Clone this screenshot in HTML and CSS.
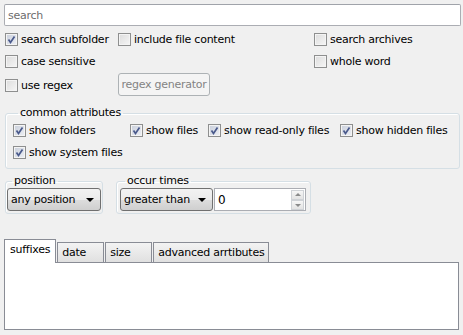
FILE: index.html
```html
<!DOCTYPE html>
<html>
<head>
    <title>Search</title>
    <meta name="viewport" content="width=device-width, initial-scale=1.0">
    <link rel="stylesheet" href="styles.css">
</head>
<body>

    <!-- Search text -->
    <input class="searchInput" type="text" placeholder="search">

    <!-- Top options -->
    <div class="options">
        <label class="check"><span class="box checked"><svg viewBox="0 0 11 11"><path d="M2.5 5.5 L4.5 8.5 L8.5 2.5"/></svg></span>search subfolder</label>
        <label class="check"><span class="box"></span>include file content</label>
        <label class="check"><span class="box"></span>search archives</label>

        <label class="check"><span class="box"></span>case sensitive</label>
        <span></span>
        <label class="check"><span class="box"></span>whole word</label>

        <label class="check"><span class="box"></span>use regex</label>
        <div><button class="regexButton" disabled>regex generator</button></div>
        <span></span>
    </div>

    <!-- Common attributes -->
    <fieldset class="group attributes">
        <legend>common attributes</legend>
        <div class="attrRow">
            <label class="check w117"><span class="box checked"><svg viewBox="0 0 11 11"><path d="M2.5 5.5 L4.5 8.5 L8.5 2.5"/></svg></span>show folders</label>
            <label class="check w78"><span class="box checked"><svg viewBox="0 0 11 11"><path d="M2.5 5.5 L4.5 8.5 L8.5 2.5"/></svg></span>show files</label>
            <label class="check w132"><span class="box checked"><svg viewBox="0 0 11 11"><path d="M2.5 5.5 L4.5 8.5 L8.5 2.5"/></svg></span>show read-only files</label>
            <label class="check"><span class="box checked"><svg viewBox="0 0 11 11"><path d="M2.5 5.5 L4.5 8.5 L8.5 2.5"/></svg></span>show hidden files</label>
        </div>
        <div class="attrRow">
            <label class="check"><span class="box checked"><svg viewBox="0 0 11 11"><path d="M2.5 5.5 L4.5 8.5 L8.5 2.5"/></svg></span>show system files</label>
        </div>
    </fieldset>

    <!-- Position / occur times -->
    <div class="row">
        <fieldset class="group small positionGroup">
            <legend>position</legend>
            <div class="combo w94">any position<span class="arrow"></span></div>
        </fieldset>
        <fieldset class="group small occurGroup">
            <legend>occur times</legend>
            <div class="combo w93">greater than<span class="arrow"></span></div>
            <div class="spin">
                <span>0</span>
                <div class="spinButtons">
                    <span class="spinUp"></span>
                    <span class="spinDown"></span>
                </div>
            </div>
        </fieldset>
    </div>

    <!-- Tabs -->
    <div class="tabs">
        <div class="tabBar">
            <div class="tab active">suffixes</div>
            <div class="tab t47">date</div>
            <div class="tab t47">size</div>
            <div class="tab">advanced arrtibutes</div>
        </div>
        <div class="tabPanel"></div>
    </div>

</body>
</html>
```

FILE: styles.css
```css
body {
    margin: 0;
    width: 463px;
    height: 335px;
    overflow: hidden;
    background-color: #f0f0f0;
    font-family: "DejaVu Sans", Verdana, sans-serif;
    font-size: 11px;
    letter-spacing: -0.25px;
    color: #000;
}

.searchInput {
    display: block;
    box-sizing: border-box;
    width: 457px;
    height: 22px;
    margin: 4px 0 0 4px;
    padding: 0 3px;
    border: 1px solid #abadb3;
    border-top-color: #a0a3aa;
    border-radius: 2px;
    background: #fff;
    font: inherit;
    letter-spacing: inherit;
}

.searchInput::placeholder {
    color: #6d6d6d;
}

.options {
    display: grid;
    grid-template-columns: 113px 196px 1fr;
    grid-template-rows: 22px 22px 26px;
    margin: 2px 0 0 5px;
}

.check {
    display: flex;
    align-items: center;
    white-space: nowrap;
}

.box {
    box-sizing: border-box;
    width: 13px;
    height: 13px;
    margin-right: 3px;
    border: 1px solid #8e8f8f;
    background: linear-gradient(135deg, #dcdcdc, #f6f6f6);
    box-shadow: inset 0 0 0 1px #f4f4f4;
    flex-shrink: 0;
}

.box svg {
    display: block;
    width: 11px;
    height: 11px;
}

.box svg path {
    fill: none;
    stroke: #4a5a8c;
    stroke-width: 1.7;
}

.box.checked {
    background: linear-gradient(135deg, #c9cfdb, #eef0f5);
}

.regexButton {
    box-sizing: border-box;
    width: 92px;
    height: 23px;
    margin-top: 1px;
    border: 1px solid #adb2b5;
    border-radius: 3px;
    background: #f4f4f4;
    color: #838383;
    font: inherit;
    letter-spacing: inherit;
    padding: 0;
}

.group {
    margin: 0;
    padding: 0;
    border: 1px solid #d5dfe5;
    border-radius: 3px;
    box-shadow: inset 1px 1px 0 #fff;
}

.group legend {
    padding: 0 2px;
    margin-left: 5px;
    line-height: 12px;
}

.attributes {
    width: 455px;
    box-sizing: border-box;
    margin: 9px 0 0 5px;
    padding: 0 0 5px 7px;
}

.attrRow {
    display: flex;
    height: 22px;
}

.w117 { width: 117px; }
.w78 { width: 78px; }
.w132 { width: 132px; }

.row {
    display: flex;
    margin: 6px 0 0 5px;
}

.small {
    box-sizing: border-box;
    padding: 1px 1px 2px 1px;
}

.positionGroup {
    width: 98px;
}

.occurGroup {
    display: flex;
    width: 195px;
    margin-left: 13px;
    padding-left: 3px;
}

.combo {
    position: relative;
    box-sizing: border-box;
    height: 23px;
    line-height: 21px;
    padding-left: 3px;
    border: 1px solid #707070;
    border-radius: 3px;
    background: linear-gradient(#f2f2f2 0%, #ebebeb 50%, #dddddd 51%, #cfcfcf 100%);
}

.w94 { width: 94px; }
.w93 { width: 93px; }

.arrow {
    position: absolute;
    right: 6px;
    top: 9px;
    border-left: 4px solid transparent;
    border-right: 4px solid transparent;
    border-top: 4px solid #000;
}

.spin {
    box-sizing: border-box;
    display: flex;
    justify-content: space-between;
    align-items: center;
    width: 92px;
    height: 23px;
    margin-left: 1px;
    padding-left: 3px;
    border: 1px solid #abadb3;
    background: #fff;
    font-size: 12px;
}

.spinButtons {
    display: flex;
    flex-direction: column;
    margin-right: 1px;
}

.spinUp, .spinDown {
    position: relative;
    box-sizing: border-box;
    width: 13px;
    height: 10px;
    border: 1px solid #cfd2d6;
    background: linear-gradient(#f6f6f6, #e3e3e3);
}

.spinUp::after, .spinDown::after {
    content: "";
    position: absolute;
    left: 3px;
    border-left: 3px solid transparent;
    border-right: 3px solid transparent;
}

.spinUp::after {
    top: 2px;
    border-bottom: 3px solid #8a8a8a;
}

.spinDown::after {
    top: 3px;
    border-top: 3px solid #8a8a8a;
}

.tabs {
    margin: 25px 0 0 4px;
    width: 455px;
}

.tabBar {
    display: flex;
    align-items: flex-end;
    height: 23px;
}

.tab {
    box-sizing: border-box;
    height: 20px;
    padding: 0 4px;
    line-height: 19px;
    border: 1px solid #898c95;
    border-bottom: none;
    background: linear-gradient(#f3f3f3, #e0e0e0);
    margin-left: 1px;
}

.t47 { width: 47px; }

.tab.active {
    height: 24px;
    margin-left: 0;
    margin-bottom: -1px;
    padding: 0 5px;
    background: #fff;
    line-height: 19px;
    position: relative;
}

.tabPanel {
    box-sizing: border-box;
    height: 68px;
    border: 1px solid #898c95;
    background: #fff;
}
```
